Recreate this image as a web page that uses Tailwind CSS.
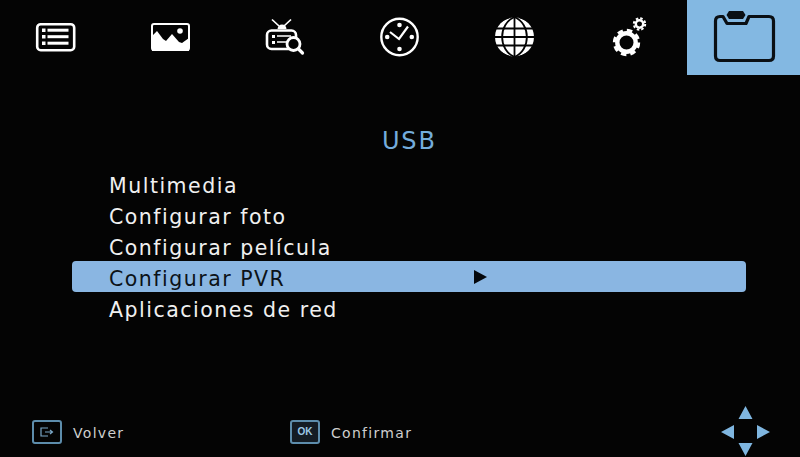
<!DOCTYPE html>
<html lang="es">
<head>
  <meta charset="UTF-8" />
  <meta name="viewport" content="width=device-width, initial-scale=1.0" />
  <title>USB</title>
  <script src="https://cdn.jsdelivr.net/npm/@tailwindcss/browser@4"></script>
</head>
<body class="bg-[#040404] w-[800px] h-[457px] overflow-hidden font-['DejaVu_Sans',sans-serif]">
  <div class="flex flex-col h-full">
    <!-- top icons -->
    <nav class="flex h-[75px] shrink-0">
      <div class="w-[114px] flex justify-center">
        <svg width="114" height="75" viewBox="0 0 114 75" fill="none">
          <rect x="37.2" y="24.2" width="37" height="26" rx="3.5" stroke="#fff" stroke-width="2.6"/>
          <rect x="42" y="28.5" width="3.5" height="3.5" fill="#fff"/>
          <rect x="42" y="35" width="3.5" height="3.5" fill="#fff"/>
          <rect x="42" y="41.5" width="3.5" height="3.5" fill="#fff"/>
          <rect x="47.5" y="28.7" width="21" height="3" fill="#fff"/>
          <rect x="47.5" y="35.2" width="21" height="3" fill="#fff"/>
          <rect x="47.5" y="41.7" width="21" height="3" fill="#fff"/>
        </svg>
      </div>
      <div class="w-[114px] flex justify-center">
        <svg width="114" height="75" viewBox="114 0 114 75" fill="none">
          <rect x="152" y="24" width="37" height="26" rx="2" stroke="#fff" stroke-width="2"/>
          <path d="M152 36 L157 31 L163 39 L166 41 L172 34 L179 42 L182 43 L189 38 V51 H152 Z" fill="#fff"/>
          <circle cx="180" cy="31" r="2.8" fill="#fff"/>
        </svg>
      </div>
      <div class="w-[114px] flex justify-center">
        <svg width="114" height="75" viewBox="228 0 114 75" fill="none">
          <path d="M272 19.5 L279 26 M291 19.5 L284 26" stroke="#fff" stroke-width="1.7"/>
          <path d="M277.500 29 Q278 24.500 282 24.500 Q286 24.500 286.500 29 Z" fill="#fff"/>
          <rect x="267" y="30.500" width="29" height="18.500" rx="4.500" stroke="#fff" stroke-width="2.600"/>
          <rect x="272" y="35" width="3" height="3" fill="#fff"/>
          <rect x="272" y="41" width="3" height="3" fill="#fff"/>
          <path d="M277 36 H291 M277 42 H287" stroke="#fff" stroke-width="1.600"/>
          <circle cx="293.500" cy="44" r="6.500" fill="#040404" stroke="#fff" stroke-width="2.800"/>
          <path d="M298.500 49 L302.500 53" stroke="#fff" stroke-width="3.200" stroke-linecap="round"/>
        </svg>
      </div>
      <div class="w-[114px] flex justify-center">
        <svg width="114" height="75" viewBox="342 0 114 75" fill="none">
          <circle cx="399.5" cy="37" r="18.2" stroke="#fff" stroke-width="2.4"/>
          <circle cx="399.5" cy="25" r="2.3" fill="#fff"/>
          <circle cx="399.5" cy="49" r="2.3" fill="#fff"/>
          <circle cx="387.2" cy="37" r="2.3" fill="#fff"/>
          <circle cx="411.8" cy="37" r="2.3" fill="#fff"/>
          <path d="M390 32 L399 39 L408 26.5" stroke="#fff" stroke-width="2.2"/>
        </svg>
      </div>
      <div class="w-[114px] flex justify-center">
        <svg width="114" height="75" viewBox="456 0 114 75" fill="none">
          <circle cx="514.5" cy="37" r="19.5" fill="#fff"/>
          <path d="M514.5 17 V57 M494 28.5 H535 M494 37 H535 M494 45.5 H535" stroke="#040404" stroke-width="1.8"/>
          <path d="M514.5 17 C498 24 498 50 514.5 57 M514.5 17 C531 24 531 50 514.5 57" stroke="#040404" stroke-width="1.8"/>
          <path d="M510 17.5 C498 21 491 30 493 37 C491 44 498 53 510 56.500 M519 17.500 C531 21 538 30 536 37 C538 44 531 53 519 56.500" stroke="#040404" stroke-width="1"/>
        </svg>
      </div>
      <div class="w-[114px] flex justify-center">
        <svg width="114" height="75" viewBox="570 0 114 75" fill="none">
          <circle cx="626.500" cy="42.500" r="9.200" stroke="#fff" stroke-width="4.400"/>
          <circle cx="626.500" cy="42.500" r="12.200" stroke="#fff" stroke-width="3" stroke-dasharray="5.500 4.080"/>
          <circle cx="639.500" cy="24" r="3.700" stroke="#fff" stroke-width="2.400"/>
          <circle cx="639.500" cy="24" r="5.700" stroke="#fff" stroke-width="2" stroke-dasharray="2.500 1.980"/>
        </svg>
      </div>
      <div class="w-[113px] ml-auto bg-[#83b8e2] flex justify-center">
        <svg width="113" height="75" viewBox="687 0 113 75" fill="none">
          <path d="M720 16.500 Q715.500 16.500 715.500 21 V56 Q715.500 60.500 720 60.500 H769 Q773.500 60.500 773.500 56 V21 Q773.500 16.500 769 16.500 H749 L746 23.500 H727 L723 16.500 Z" stroke="#0a0f14" stroke-width="3.200" stroke-linejoin="round"/>
          <path d="M729 11 H743 L745.500 15 L743 19 H729 L726.500 15 Z" fill="#0a0f14"/>
        </svg>
      </div>
    </nav>

    <h1 class="mt-[50px] ml-[382px] text-[24px] leading-[32px] tracking-[1.8px] text-[#74acdc] font-normal">USB</h1>

    <!-- menu -->
    <ul class="mt-[11px] w-[674px] ml-[72px] text-[20.5px] leading-[37px] tracking-[1.5px] text-[#f0f0f0]">
      <li class="pl-[37px] h-[31px]">Multimedia</li>
      <li class="pl-[37px] h-[31px]">Configurar foto</li>
      <li class="pl-[37px] h-[31px]">Configurar película</li>
      <li class="pl-[37px] h-[31px] bg-[#8ab6e2] text-[#0c1218] rounded-[4px] flex items-start justify-between">
        <span>Configurar PVR</span>
        <svg class="mr-[259px] self-center" width="13" height="14" viewBox="0 0 13 14"><path d="M0 0 L13 7 L0 14 Z" fill="#05080c"/></svg>
      </li>
      <li class="pl-[37px] h-[31px]">Aplicaciones de red</li>
    </ul>

    <!-- footer hints -->
    <footer class="mt-auto h-[51px] flex text-[14px] leading-[20px] tracking-[1.3px] text-[#cfcfcf]">
      <div class="ml-[32px] w-[258px] flex items-center gap-[11px] self-start mt-[14px]">
        <span class="w-[30px] h-[24px] border-2 border-[#5d8dac] rounded-[3px] flex items-center justify-center">
          <svg width="14" height="10" viewBox="0 0 14 10" fill="none"><path d="M8 1 H1 V9 H8 M5 5 H12 M10 3 L12.500 5 L10 7" stroke="#7aa8c8" stroke-width="1.200"/></svg>
        </span>
        <span class="pt-[2px]">Volver</span>
      </div>
      <div class="flex items-center gap-[11px] self-start mt-[14px]">
        <span class="w-[30px] h-[24px] border-2 border-[#5d8dac] bg-[#141c24] rounded-[3px] flex items-center justify-center text-[10px] font-bold tracking-normal text-[#9cc8e6] font-['Liberation_Sans',sans-serif]">OK</span>
        <span class="pt-[2px]">Confirmar</span>
      </div>
      <svg class="ml-auto mr-[29px]" width="50" height="51" viewBox="721 406 50 51">
        <path d="M745.500 406 L752.500 419 H738.500 Z M745.500 456 L752.500 443 H738.500 Z M721 432 L734 425 V439 Z M770 432 L757 425 V439 Z" fill="#7fb6e0"/>
      </svg>
    </footer>
  </div>
</body>
</html>
